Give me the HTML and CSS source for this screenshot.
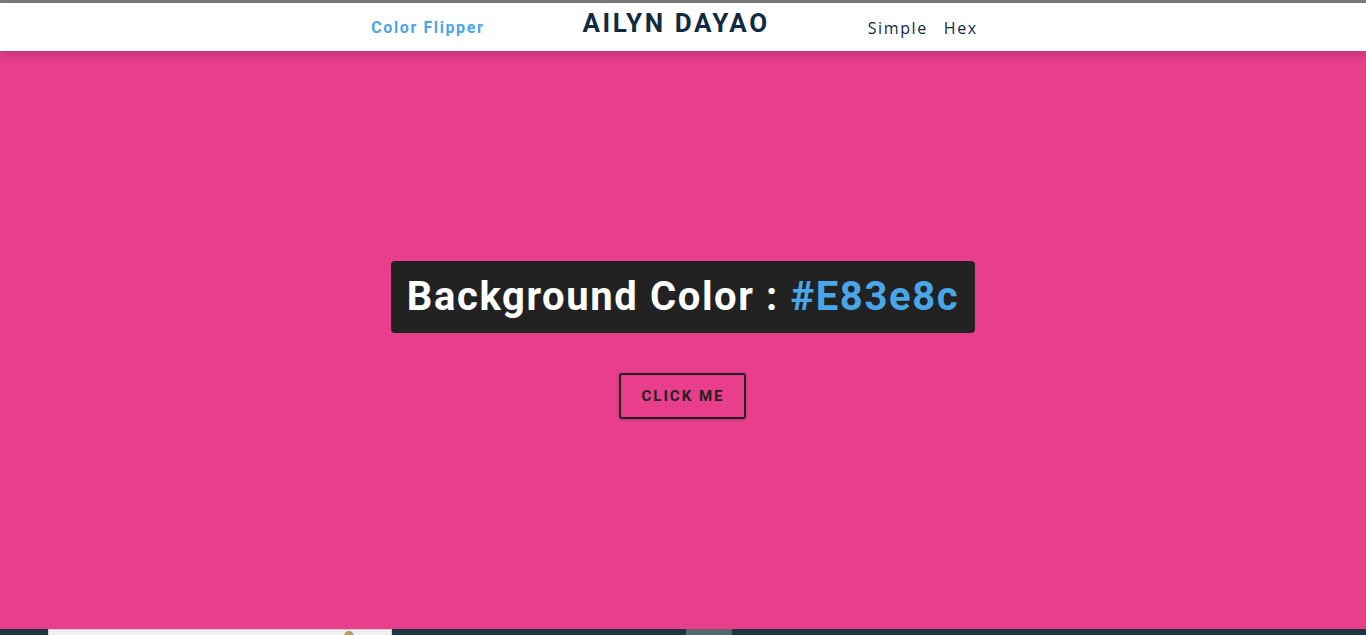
FILE: index.html
```html
<!DOCTYPE html>
<html lang="en">
<head>
<meta charset="utf-8">
<title>Color Flipper</title>
<link rel="stylesheet" href="styles.css">
</head>
<body>
<div class="topline"></div>
<nav class="nav">
  <div class="nav-center">
    <h4 class="brand">Color Flipper</h4>
    <h2 class="name">AILYN DAYAO</h2>
    <ul class="links">
      <li><a href="#">Simple</a></li>
      <li><a href="#">Hex</a></li>
    </ul>
  </div>
</nav>
<main class="main">
  <div class="container">
    <h2 class="label">Background Color : <span class="color">#E83e8c</span></h2>
    <button class="btn">click me</button>
  </div>
</main>
<div class="taskbar">
  <div class="task-window"><span class="task-icon"></span></div>
  <div class="task-gap"></div>
  <div class="task-thumb"></div>
  <div class="task-rest"></div>
</div>
</body>
</html>
```
FILE: styles.css
```css
* { box-sizing: border-box; margin: 0; padding: 0; }
html, body { height: 100%; }
body {
  font-family: Roboto, "Liberation Sans", sans-serif;
  background: #e83e8c;
  display: flex;
  flex-direction: column;
  overflow: hidden;
}
.topline {
  height: 3px;
  background: #7b7b7b;
  flex: none;
}
.nav {
  height: 48px;
  background: #fff;
  box-shadow: 0 4px 10px rgba(0, 0, 0, 0.18);
  flex: none;
  position: relative;
  z-index: 1;
}
.nav-center {
  display: flex;
  justify-content: center;
  align-items: flex-start;
  gap: 98px;
  padding-right: 17px;
  height: 100%;
}
.brand {
  font-size: 16px;
  font-weight: 700;
  letter-spacing: 1.6px;
  color: #49a6e9;
  margin-top: 15px;
  line-height: 1.2;
}
.name {
  font-size: 26px;
  font-weight: 700;
  letter-spacing: 2.6px;
  color: #102a42;
  margin-top: 5px;
  line-height: 1.2;
}
.links {
  list-style: none;
  display: flex;
  gap: 16px;
  margin-top: 16px;
}
.links a {
  text-decoration: none;
  font-family: "Open Sans", sans-serif;
  font-size: 16px;
  letter-spacing: 1.6px;
  color: #102a42;
  line-height: 1.2;
}
.main {
  flex: 1;
  display: flex;
  align-items: center;
  justify-content: center;
}
.container {
  display: flex;
  flex-direction: column;
  align-items: center;
  gap: 40px;
}
.label {
  background: #222;
  color: #fff;
  font-size: 40px;
  font-weight: 700;
  letter-spacing: 1.6px;
  padding: 0 16px;
  height: 72px;
  line-height: 72px;
  border-radius: 4px;
}
.color { color: #49a6e9; }
.btn {
  width: 127px;
  height: 46px;
  background: transparent;
  border: 2px solid #222;
  border-radius: 3px;
  font-family: Roboto, sans-serif;
  font-size: 15px;
  font-weight: 700;
  text-transform: uppercase;
  letter-spacing: 2px;
  color: #222;
  box-shadow: 0 1px 3px rgba(0, 0, 0, 0.2);
}
.taskbar {
  height: 6px;
  background: #1f3441;
  display: flex;
  flex: none;
}
.task-window {
  margin-left: 48px;
  width: 344px;
  background: #f0f0f0;
  border: 1px solid #cfcfcf;
  border-bottom: none;
  position: relative;
}
.task-icon {
  position: absolute;
  left: 295px;
  top: 1px;
  width: 10px;
  height: 6px;
  border-radius: 5px 5px 0 0;
  background: #b59a6a;
}
.task-gap { width: 294px; }
.task-thumb {
  width: 46px;
  background: #56666d;
}
.task-rest { flex: 1; }
```
